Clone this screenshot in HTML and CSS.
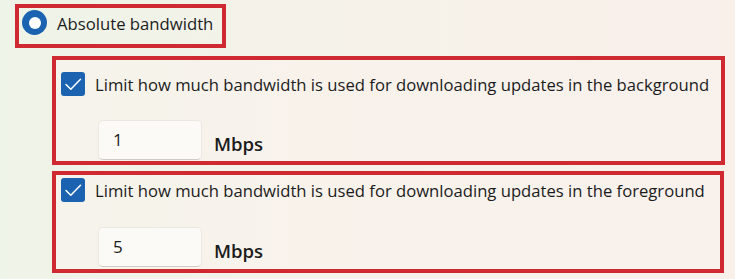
FILE: index.html
```html
<!DOCTYPE html>
<html lang="en">
<head>
<meta charset="utf-8">
<title>Bandwidth</title>
<link rel="stylesheet" href="styles.css">
</head>
<body>
<div class="page">
  <div class="hl radio-box">
    <span class="radio"><span class="radio-dot"></span></span>
    <span class="radio-label">Absolute bandwidth</span>
  </div>

  <div class="hl group group-bg">
    <div class="check-row">
      <span class="check">
        <svg viewBox="0 0 24 24" width="24" height="24"><path d="M5 12.5 L9.8 17.3 L19.5 7.3" fill="none" stroke="#fff" stroke-width="1.5" stroke-linecap="round" stroke-linejoin="round"/></svg>
      </span>
      <span class="check-label">Limit how much bandwidth is used for downloading updates in the background</span>
    </div>
    <div class="input-row">
      <div class="num-input">1</div>
      <span class="unit">Mbps</span>
    </div>
  </div>

  <div class="hl group group-fg">
    <div class="check-row">
      <span class="check">
        <svg viewBox="0 0 24 24" width="24" height="24"><path d="M5 12.5 L9.8 17.3 L19.5 7.3" fill="none" stroke="#fff" stroke-width="1.5" stroke-linecap="round" stroke-linejoin="round"/></svg>
      </span>
      <span class="check-label">Limit how much bandwidth is used for downloading updates in the foreground</span>
    </div>
    <div class="input-row">
      <div class="num-input">5</div>
      <span class="unit">Mbps</span>
    </div>
  </div>
</div>
</body>
</html>
```

FILE: styles.css
```css
* { box-sizing: border-box; }
html, body { margin: 0; padding: 0; }
body {
  width: 735px;
  height: 279px;
  overflow: hidden;
  background: linear-gradient(90deg, #eef4e7 0%, #f5f2e9 40%, #f9f0ea 100%);
  font-family: "Open Sans", "Noto Sans", sans-serif;
  color: #1c1c1c;
}
.page {
  display: flex;
  flex-direction: column;
  align-items: flex-start;
  padding-top: 4px;
}
.hl {
  border: 4px solid #cf2a31;
}
.radio-box {
  margin-left: 15px;
  width: 211px;
  height: 44px;
  display: flex;
  align-items: flex-start;
  padding: 2px 0 0 3px;
}
.radio {
  width: 25px;
  height: 25px;
  border-radius: 50%;
  background: #1b63b1;
  display: flex;
  align-items: center;
  justify-content: center;
  flex-shrink: 0;
}
.radio-dot {
  width: 12px;
  height: 12px;
  border-radius: 50%;
  background: #fff;
}
.radio-label {
  margin-left: 10px;
  font-size: 16.7px;
  line-height: 25px;
  margin-top: 1px;
  white-space: nowrap;
}
.group {
  margin-left: 52px;
  display: flex;
  flex-direction: column;
  background: rgba(250, 243, 236, 0.55);
}
.group-bg {
  margin-top: 8px;
  width: 673px;
  height: 109px;
  padding: 12px 0 0 5px;
}
.group-fg {
  margin-top: 6px;
  width: 672px;
  height: 102px;
  padding: 3px 0 0 5px;
}
.check-row {
  display: flex;
  align-items: center;
}
.check {
  width: 24px;
  height: 24px;
  border-radius: 3px;
  background: #1b63b1;
  display: flex;
  flex-shrink: 0;
}
.check svg { display: block; }
.check-label {
  margin-left: 10px;
  font-size: 16.65px;
  white-space: nowrap;
}
.input-row {
  display: flex;
  align-items: center;
  margin-left: 37px;
  margin-top: 24px;
}
.group-fg .input-row { margin-top: 25px; }
.num-input {
  width: 104px;
  height: 40px;
  border: 1px solid #ebe7e1;
  border-bottom-color: #cfcbc6;
  border-radius: 5px;
  background: #fbfaf6;
  padding-left: 14px;
  font-size: 17px;
  line-height: 38px;
}
.unit {
  margin-left: 12px;
  margin-top: 7px;
  font-size: 18.5px;
  font-weight: 600;
}
```
